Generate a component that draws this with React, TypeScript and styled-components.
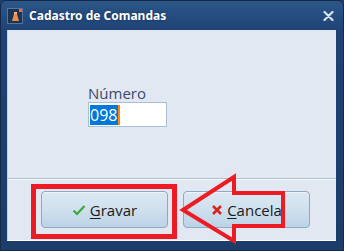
import React from "react";
import styled, { createGlobalStyle } from "styled-components";

const Global = createGlobalStyle`
  html, body { margin: 0; padding: 0; background: #1e3f6b; }
  * { box-sizing: border-box; }
`;

const Window = styled.div`
  position: relative;
  width: 344px;
  height: 251px;
  display: flex;
  flex-direction: column;
  background: linear-gradient(#2c5788 0px, #1f4275 30px, #1c3d6a 100%);
  border: 1px solid #14294a;
  border-radius: 6px 6px 0 0;
  padding: 0 7px 9px 6px;
  font-family: "Open Sans", "Noto Sans", sans-serif;
`;

const TitleBar = styled.div`
  height: 29px;
  display: flex;
  align-items: center;
  gap: 6px;
`;

const TitleText = styled.span`
  color: #ffffff;
  font-family: "Noto Sans", sans-serif;
  font-weight: 700;
  font-size: 12px;
  flex: 1;
  text-shadow: 0 0 3px rgba(10, 30, 60, 0.6);
`;

const CloseBtn = styled.div`
  width: 14px;
  height: 14px;
  display: flex;
  align-items: center;
  justify-content: center;
  margin-right: 1px;
`;

const Body = styled.div`
  flex: 1;
  display: flex;
  flex-direction: column;
  background: #e1e8f1;
  border-left: 1px solid #c4d2e2;
  border-bottom: 1px solid #ffffff;
`;

const Fields = styled.div`
  flex: 1;
  display: flex;
  flex-direction: column;
  padding: 54px 0 0 80px;
`;

const Label = styled.label`
  color: #3c4a6a;
  font-size: 15px;
  line-height: 18px;
  font-family: "Open Sans", sans-serif;
`;

const Input = styled.div`
  width: 79px;
  height: 25px;
  background: #ffffff;
  border: 1px solid #a9bfd6;
  display: flex;
  align-items: center;
  padding-left: 1px;
`;

const Selected = styled.span`
  background: #0078d7;
  color: #ffffff;
  font-size: 16px;
  line-height: 20px;
  height: 20px;
  padding: 0 1px 0 0;
  border-right: 2px solid #ff8a00;
  font-family: "Open Sans", sans-serif;
`;

const Panel = styled.div`
  height: 62px;
  border-top: 1px solid #aebfd2;
  box-shadow: inset 0 1px 0 #f4f7fb;
  display: flex;
  align-items: flex-start;
  padding: 12px 0 0 33px;
  gap: 15px;
`;

const Button = styled.div`
  width: 127px;
  height: 37px;
  border: 1px solid #8ea9c6;
  border-radius: 4px;
  background: linear-gradient(#dce8f3 0%, #cfe0ee 50%, #bcd3e6 100%);
  box-shadow: inset 0 1px 0 #eef4fa;
  display: flex;
  align-items: center;
  justify-content: center;
  gap: 4px;
  color: #1a1a1a;
  font-size: 15px;
  font-family: "Open Sans", sans-serif;
`;

const U = styled.span`
  text-decoration: underline;
  text-underline-offset: 2px;
  text-decoration-thickness: 1px;
`;

const Highlight = styled.div`
  position: absolute;
  left: 30px;
  top: 183px;
  width: 146px;
  height: 55px;
  border: 5px solid #ed1c24;
  pointer-events: none;
`;

const Arrow = styled.svg`
  position: absolute;
  left: 178px;
  top: 172px;
  pointer-events: none;
`;

export default function App() {
  return (
    <>
      <Global />
      <Window>
        <TitleBar>
          <svg width="16" height="16" viewBox="0 0 16 16">
            <rect x="0.5" y="0.5" width="15" height="15" fill="#1b3556" stroke="#5b7598" />
            <path d="M5 13 L7 6 L10 6 L12 13 Z" fill="#f08a4b" />
            <rect x="7" y="4" width="3" height="2" fill="#f6b48a" />
            <rect x="12" y="1" width="3" height="3" fill="#f26b2a" />
          </svg>
          <TitleText>Cadastro de Comandas</TitleText>
          <CloseBtn>
            <svg width="11" height="10" viewBox="0 0 11 10">
              <path d="M1.5 1 L9.5 9 M9.5 1 L1.5 9" stroke="#d7e2ef" strokeWidth="2.2" strokeLinecap="round" />
            </svg>
          </CloseBtn>
        </TitleBar>
        <Body>
          <Fields>
            <Label>Número</Label>
            <Input>
              <Selected>098</Selected>
            </Input>
          </Fields>
          <Panel>
            <Button>
              <svg width="14" height="12" viewBox="0 0 14 12">
                <path d="M1.5 6.5 L5 10 L12.5 2" fill="none" stroke="#3aa83a" strokeWidth="2.2" />
              </svg>
              <span>
                <U>G</U>ravar
              </span>
            </Button>
            <Button>
              <svg width="12" height="12" viewBox="0 0 12 12">
                <path d="M2 2 L10 10 M10 2 L2 10" stroke="#d8261e" strokeWidth="2.6" />
              </svg>
              <span>
                <U>C</U>ancela
              </span>
            </Button>
          </Panel>
        </Body>
        <Highlight />
        <Arrow width="110" height="72" viewBox="0 0 110 72">
          <path
            d="M4 37 L55 4 L55 20 L104 20 L104 53 L55 53 L55 68 Z"
            fill="none"
            stroke="#ed1c24"
            strokeWidth="4"
            strokeLinejoin="miter"
          />
        </Arrow>
      </Window>
    </>
  );
}
